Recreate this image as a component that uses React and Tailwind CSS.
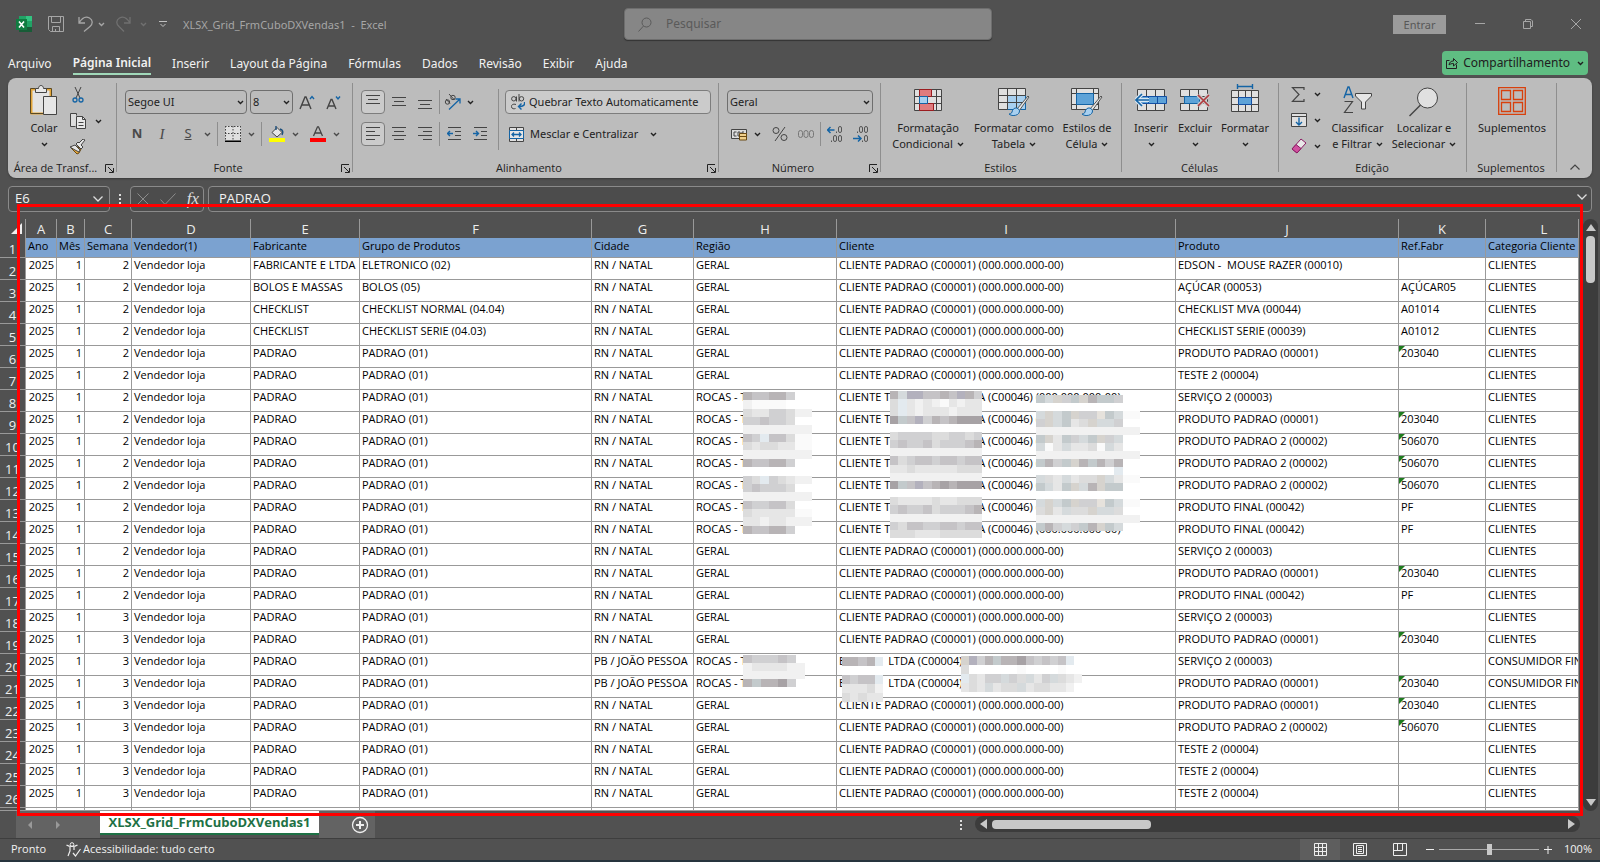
import { useState } from "react";

const MENU = ["Arquivo", "Página Inicial", "Inserir", "Layout da Página", "Fórmulas", "Dados", "Revisão", "Exibir", "Ajuda"];

const COLUMNS = [
  { letter: "A", title: "Ano", width: "w-[31px]" },
  { letter: "B", title: "Mês", width: "w-[28px]" },
  { letter: "C", title: "Semana", width: "w-[47px]" },
  { letter: "D", title: "Vendedor(1)", width: "w-[119px]" },
  { letter: "E", title: "Fabricante", width: "w-[109px]" },
  { letter: "F", title: "Grupo de Produtos", width: "w-[232px]" },
  { letter: "G", title: "Cidade", width: "w-[102px]" },
  { letter: "H", title: "Região", width: "w-[143px]" },
  { letter: "I", title: "Cliente", width: "w-[339px]" },
  { letter: "J", title: "Produto", width: "w-[223px]" },
  { letter: "K", title: "Ref.Fabr", width: "w-[87px]" },
  { letter: "L", title: "Categoria Cliente", width: "pl-6" },
];

// [semana, fabricante, grupo, local, produto, ref]
const P = "PADRAO";
const G = "PADRAO (01)";
const SALES = [
  [2, "FABRICANTE E LTDA", "ELETRONICO (02)", "natal", "EDSON -  MOUSE RAZER (00010)", ""],
  [2, "BOLOS E MASSAS", "BOLOS (05)", "natal", "AÇÚCAR (00053)", "AÇÚCAR05"],
  [2, "CHECKLIST", "CHECKLIST NORMAL (04.04)", "natal", "CHECKLIST MVA (00044)", "A01014"],
  [2, "CHECKLIST", "CHECKLIST SERIE (04.03)", "natal", "CHECKLIST SERIE (00039)", "A01012"],
  [2, P, G, "natal", "PRODUTO PADRAO (00001)", "203040"],
  [2, P, G, "natal", "TESTE 2 (00004)", ""],
  [2, P, G, "rocas", "SERVIÇO 2 (00003)", ""],
  [2, P, G, "rocas", "PRODUTO PADRAO (00001)", "203040"],
  [2, P, G, "rocas", "PRODUTO PADRAO 2 (00002)", "506070"],
  [2, P, G, "rocas", "PRODUTO PADRAO 2 (00002)", "506070"],
  [2, P, G, "rocas", "PRODUTO PADRAO 2 (00002)", "506070"],
  [2, P, G, "rocas", "PRODUTO FINAL (00042)", "PF"],
  [2, P, G, "rocas", "PRODUTO FINAL (00042)", "PF"],
  [2, P, G, "natal", "SERVIÇO 2 (00003)", ""],
  [2, P, G, "natal", "PRODUTO PADRAO (00001)", "203040"],
  [2, P, G, "natal", "PRODUTO FINAL (00042)", "PF"],
  [3, P, G, "natal", "SERVIÇO 2 (00003)", ""],
  [3, P, G, "natal", "PRODUTO PADRAO (00001)", "203040"],
  [3, P, G, "pessoa", "SERVIÇO 2 (00003)", ""],
  [3, P, G, "pessoa", "PRODUTO PADRAO (00001)", "203040"],
  [3, P, G, "natal", "PRODUTO PADRAO (00001)", "203040"],
  [3, P, G, "natal", "PRODUTO PADRAO 2 (00002)", "506070"],
  [3, P, G, "natal", "TESTE 2 (00004)", ""],
  [3, P, G, "natal", "TESTE 2 (00004)", ""],
  [3, P, G, "natal", "TESTE 2 (00004)", ""],
];

const CITY = { natal: "RN / NATAL", rocas: "RN / NATAL", pessoa: "PB / JOÃO PESSOA" };

// Masked blocks over private data, one letter per tile
const TONES = {
  s: "#a7a2a5", a: "#b8b4b6", b: "#c5c3c6", c: "#d0d0d2", d: "#dcdcdc", e: "#e6e6e6", f: "#f1f1f1",
  g: "#fafafa", w: "#ffffff", p: "#b3b1bd", t: "#c3cacc", u: "#d5dadc", y: "#d6d3ce", z: "#e6e2dc", h: "#e3eaef",
};
const MASKS = [
  {
    x: 743, y: 173, w: 26 / 3, h: 8.35,
    rows: ["abbaac..", "fggggw..", "deeccdff", "ccbccdww", "ffffffff", "bchbbdgg", "deddeegg", "ffffffff", "abbaac..", "........", "cdhcdeff", "cbcccdww", "ffffffff", "bccbbdww", "deeeeegg", "eefeefff", "abbaac.."],
  },
  {
    x: 890, y: 172, w: 8.364, h: 8.167,
    rows: ["auppbbabpac", "dhefefgefee", "dhefeeefeee", "stbpcabasss", "...........", "dccccddccdc", "cbccbdcccba", "fffffffffff", "bdcbbcbbcbb", "eedeeeeeddd", "fffffffffff", "stbpbasasss", "...........", "deeeedeeddd", "cbccbdcccba", "fffffffffff", "cdbbccbbcbb", "dddeeeddddd"],
  },
  {
    x: 1036, y: 176, w: 26 / 3, h: 8,
    rows: ["tuyctyattc..", "............", "uyutyccztugg", "cyutedyuuc..", "ffffffffffff", "tyetcutycu..", "ugeueedgue..", "ffffffffffff", "tactyataca..", "wwwwwwwwwh..", "udeueddyuegg", "tuetyuaytt..", "............", "uyutyccztugg", "dyeuddyuud..", "ffffffffffff", "tacuctaytu.."],
  },
  { x: 743, y: 436, w: 8.83, h: 8, rows: ["bcccbc.", "feeeeff", "fffffff", "ataasc."] },
  { x: 842, y: 438, w: 8.2, h: 8.9, rows: ["aabah", ".....", "bcbbh", "eeedf", "dedee"] },
  {
    x: 961, y: 437, w: 8.07, h: 8.9,
    rows: ["ypcataasbcbcbh.", "dwwwwwwgwwwwgw.", "hdeccucduecudef", "edeueddueddeef."],
  },
];

function Masks() {
  return (
    <svg className="pointer-events-none absolute inset-0 h-full w-full" shapeRendering="crispEdges" aria-hidden="true">
      {MASKS.map((m, i) =>
        m.rows.map((row, r) =>
          row.split("").map((tone, c) =>
            tone === "." ? null : (
              <rect key={`${i}-${r}-${c}`} x={m.x + c * m.w} y={m.y + r * m.h} width={m.w} height={m.h} fill={TONES[tone]} />
            )
          )
        )
      )}
    </svg>
  );
}

function Icon({ w = 16, h = 16, children, className = "" }) {
  return (
    <svg width={w} height={h} viewBox={`0 0 ${w} ${h}`} fill="none" stroke="#444" className={`shrink-0 ${className}`} aria-hidden="true">
      {children}
    </svg>
  );
}

function Chevron({ className = "" }) {
  return (
    <svg width="7" height="5" viewBox="0 0 7 5" fill="none" stroke="currentColor" strokeWidth="1.4" className={`shrink-0 ${className}`} aria-hidden="true">
      <path d="M1 1l2.5 2.5L6 1" />
    </svg>
  );
}

function Tool({ label, active, className = "w-[26px]", children }) {
  return (
    <button
      aria-label={label}
      className={`flex h-6 shrink-0 items-center justify-center rounded ${active ? "border border-[#7d7d7d] bg-[#cbcbcb]" : ""} ${className}`}
    >
      {children}
    </button>
  );
}

function Divider({ className = "h-6" }) {
  return <span className={`w-px shrink-0 bg-[#8e8e8e] ${className}`} />;
}

function Group({ title, launcher, className, children }) {
  return (
    <section className={`relative flex shrink-0 flex-col ${className}`} aria-label={title}>
      <div className="flex flex-1">{children}</div>
      <div className="flex h-5 items-center pr-0.5 font-['Open_Sans',sans-serif] text-[11px]">
        <span className="flex-1 truncate text-center">{title}</span>
        {launcher && (
          <button aria-label={`Opções de ${title}`} className="flex w-3 justify-center">
            <Icon w={9} h={9}>
              <path d="M.5 8V.5H8M3 3l5 5M8.500 4v4.500H4" stroke="#222" />
            </Icon>
          </button>
        )}
      </div>
      <span className="absolute right-0 top-[5px] h-[89px] w-px bg-[#8e8e8e]" />
    </section>
  );
}

function BigButton({ icon, lines, below, className }) {
  return (
    <button className={`flex shrink-0 flex-col items-center pt-1.5 text-[11px] leading-4 ${className}`}>
      <span className="mb-1 flex h-8 items-center justify-center">{icon}</span>
      {lines.map((line, i) => (
        <span key={line} className="flex items-center gap-1 whitespace-nowrap">
          {line}
          {!below && lines.length > 1 && i === lines.length - 1 && <Chevron />}
        </span>
      ))}
      {below && <Chevron className="mt-1.5" />}
    </button>
  );
}

function Combo({ label, value, className }) {
  return (
    <span className={`relative flex h-6 items-center ${className}`}>
      <select aria-label={label} defaultValue={value} className="h-full w-full appearance-none rounded border border-[#6f6f6f] bg-transparent pl-0.5 text-[11px] text-[#222]">
        <option>{value}</option>
      </select>
      <Chevron className="pointer-events-none absolute right-[3px]" />
    </span>
  );
}

function Lines({ rows }) {
  return (
    <Icon w={14} h={14}>
      {rows.map(([x, w, y]) => (
        <path key={y} d={`M${x} ${y}.5h${w}`} />
      ))}
    </Icon>
  );
}

function Brush() {
  return (
    <g>
      <path d="M30 8L19 21l2 2L31 9z" fill="#e6e6e6" stroke="#555" />
      <path d="M19 20c-3-.5-4.500 1.500-5 4-.5 1.500-1.500 2-3 2 2 2 6 2 8.500.5 2-1.500 2.500-3.500 1.500-5z" fill="#a8d0f0" stroke="#1464a5" />
    </g>
  );
}

function TitleBar() {
  return (
    <header className="grid h-12 grid-cols-[1fr_368px_1fr] items-center pl-4 text-[#a6a6a6]">
      <div className="flex items-center">
        <Icon>
          <path d="M3 0h7v5H3z" fill="#21a366" stroke="none" />
          <path d="M10 0h6v5h-6z" fill="#33c481" stroke="none" />
          <path d="M3 5h7v6H3z" fill="#107c41" stroke="none" />
          <path d="M10 5h6v6h-6z" fill="#21a366" stroke="none" />
          <path d="M3 11h13v5H3z" fill="#185c37" stroke="none" />
          <path d="M0 3h11v11H0z" fill="#107c41" stroke="none" />
          <path d="M3 5.500l5 6M8 5.500l-5 6" stroke="#fff" strokeWidth="1.600" />
        </Icon>
        <button aria-label="Salvar" className="ml-4">
          <Icon>
            <path d="M.5.5h15v15h-13l-2-2zM3.500.5v6h9v-6M4.500 15.500v-5h7v5M7.500 15v-2" stroke="#a6a6a6" />
          </Icon>
        </button>
        <button aria-label="Desfazer" className="ml-3.5 flex items-center gap-1">
          <Icon>
            <path d="M1 1v6h6M1 7c3-5 7-7 10.500-5 3.500 2 3.500 6 .5 8.500L6 15.500" stroke="#a6a6a6" strokeWidth="1.300" />
          </Icon>
          <Chevron />
        </button>
        <button aria-label="Refazer" className="ml-[11px] flex items-center gap-2 text-[#707070]">
          <Icon>
            <path d="M14 1v6H8M14 7c-3-5-7-7-10.500-5C0 4 0 8 3 10.500L8 15.500" stroke="#707070" strokeWidth="1.300" />
          </Icon>
          <Chevron />
        </button>
        <button aria-label="Personalizar" className="ml-3">
          <Icon w={8} h={8}>
            <path d="M0 1.500h8M1.500 4L4 6.500 6.500 4" stroke="#c0c0c0" />
          </Icon>
        </button>
        <h1 className="ml-4 whitespace-pre pt-0.5 text-[11px]">XLSX_Grid_FrmCuboDXVendas1  -  Excel</h1>
      </div>
      <label className="flex h-8 items-center rounded-sm border border-[#6e6e6e] bg-[#868686] shadow-[0_1px_1px_#333]">
        <Icon w={14} h={15} className="ml-[13px]">
          <circle cx="8.500" cy="5.500" r="4.500" stroke="#5a5a5a" />
          <path d="M5.500 9L.5 14.500" stroke="#5a5a5a" />
        </Icon>
        <input type="search" aria-label="Pesquisar" placeholder="Pesquisar" className="ml-3.5 flex-1 bg-transparent text-[12px] placeholder-[#5a5a5a] outline-none" />
      </label>
      <div className="flex items-center justify-end pr-[19px]">
        <button className="mr-[29px] h-[19px] w-[53px] bg-[#9b9b9b] text-[11px] leading-[19px] text-[#575757]">Entrar</button>
        <button aria-label="Minimizar" className="mr-[38px]">
          <Icon w={10} h={10}>
            <path d="M0 4.500h10" stroke="#a6a6a6" />
          </Icon>
        </button>
        <button aria-label="Restaurar" className="mr-[38px]">
          <Icon w={10} h={10}>
            <path d="M.5 2.500h7v7h-7zM2.500 2V.5H8L9.500 2v5.500H8" stroke="#a6a6a6" />
          </Icon>
        </button>
        <button aria-label="Fechar">
          <Icon w={10} h={10}>
            <path d="M0 0l10 10M10 0L0 10" stroke="#a6a6a6" />
          </Icon>
        </button>
      </div>
    </header>
  );
}

function MenuBar() {
  return (
    <nav className="flex h-[30px] items-start justify-between pl-2 pr-3">
      <div className="flex gap-[21px]">
        {MENU.map((item) => (
          <button
            key={item}
            className={`mt-1 h-[23px] text-[12px] leading-[21px] ${item === "Página Inicial" ? "border-b-2 border-[#a0d8b9] font-semibold" : ""}`}
          >
            {item}
          </button>
        ))}
      </div>
      <button className="mt-[3px] flex h-6 items-center rounded bg-[#5fbd82] px-1 text-[12px] text-[#202020]">
        <Icon w={12} h={12} className="mr-[5px]">
          <path d="M3.500 3.500h-3v8h10v-4M3 8c.5-3 2-4 4.500-4V1.500l4 4-4 3.500V6.500C5.500 6.500 4 7 3 8z" stroke="#222" />
        </Icon>
        Compartilhamento
        <Chevron className="ml-[7px]" />
      </button>
    </nav>
  );
}

function ClipboardGroup() {
  return (
    <Group title="Área de Transf..." launcher className="w-[109px]">
      <BigButton
        className="ml-3 w-12"
        lines={["Colar"]}
        below
        icon={
          <Icon w={28} h={30}>
            <path d="M1.500 4.500h19v24h-19z" fill="#e3e3e3" stroke="#e3a63a" strokeWidth="2" />
            <path d="M.5 3.500h5M16 3.500h5.500V12M.5 3.500v25h13" stroke="#5c4a22" />
            <path d="M5.500 7.500v-4h3c0-4 5-4 5 0h3v4z" fill="#e8e8e8" />
            <path d="M13.500 11.500h13v18h-13z" fill="#e6e6e6" />
          </Icon>
        }
      />
      <div className="ml-0.5 flex flex-col gap-0.5 pt-[5px]">
        <Tool label="Recortar" className="w-4">
          <Icon>
            <path d="M5 0l5 11M11 0L6 11" />
            <circle cx="5" cy="13" r="2" stroke="#1464a5" strokeWidth="1.300" />
            <circle cx="11" cy="13" r="2" stroke="#1464a5" strokeWidth="1.300" />
          </Icon>
        </Tool>
        <Tool label="Copiar" className="w-[31px] gap-2">
          <Icon w={17}>
            <path d="M5.500 13.500h-5v-13h6v2" fill="#ddd" />
            <path d="M6.500 3.500h6l3 3v9h-9z" fill="#e8e8e8" />
            <path d="M12.500 3.500v3h3M8.500 9.500h5M8.500 12.500h5" />
          </Icon>
          <Chevron />
        </Tool>
        <Tool label="Pincel de Formatação" className="w-4">
          <Icon>
            <path d="M1 9l6 6 2-1 2-4-5-3z" fill="#e8a93b" stroke="#6b4a12" />
            <path d="M0 8l5-2 5 5-1 2-4-2zM6 5l5 5 2-2-2-2 4-5-2-1-4 4-1-1z" fill="#e6e6e6" />
          </Icon>
        </Tool>
      </div>
    </Group>
  );
}

function FontGroup() {
  return (
    <Group title="Fonte" launcher className="w-[236px]">
      <div className="flex flex-col gap-2 pl-2 pt-3">
        <div className="flex items-center">
          <Combo label="Fonte" value="Segoe UI" className="w-[122px]" />
          <Combo label="Tamanho da fonte" value="8" className="ml-[3px] w-[43px]" />
          <Tool label="Aumentar fonte" className="ml-px w-[26px]">
            <Icon w={17} h={15}>
              <path d="M1 14L6 2h1l5 12M3 10h7" strokeWidth="1.400" />
              <path d="M11 4l2-2.500L15 4" stroke="#1464a5" strokeWidth="1.400" />
            </Icon>
          </Tool>
          <Tool label="Diminuir fonte">
            <Icon w={17} h={15}>
              <path d="M2 14L6 4.500h1L11 14M3.500 11h6" strokeWidth="1.400" />
              <path d="M11 1.500L13 4l2-2.500" stroke="#1464a5" strokeWidth="1.400" />
            </Icon>
          </Tool>
        </div>
        <div className="flex items-center text-[13px] text-[#4a4a4a]">
          <Tool label="Negrito" className="w-6"><b>N</b></Tool>
          <Tool label="Itálico"><i className="font-['Liberation_Serif',serif] text-[15px]">I</i></Tool>
          <Tool label="Sublinhado"><u>S</u></Tool>
          <Tool label="Tipos de sublinhado" className="mr-1 w-3"><Chevron /></Tool>
          <Divider />
          <Tool label="Bordas" className="ml-1 w-[22px]">
            <Icon>
              <path d="M0 0h16v14H0z" fill="#e0e0e0" stroke="none" />
              <path d="M0 .5h16M.5 0v14M15.500 0v14M8 0v14M0 7.500h16" strokeDasharray="1.500 1.500" />
              <path d="M0 15.300h16" stroke="#000" strokeWidth="1.500" />
            </Icon>
          </Tool>
          <Tool label="Opções de borda" className="ml-px w-3"><Chevron /></Tool>
          <Divider className="ml-1 h-6" />
          <Tool label="Cor de preenchimento" className="ml-1 w-[22px]">
            <Icon>
              <path d="M3 6.500L8 1.500l5 5-5 4.500z" fill="#e6e6e6" />
              <path d="M7 4V0M11 3c3 1 3.500 3 2 6" strokeWidth="1.400" stroke="#1c4f7c" />
              <path d="M0 12h16v4H0z" fill="#ffff00" stroke="none" />
            </Icon>
          </Tool>
          <Tool label="Cores de preenchimento" className="ml-px w-3"><Chevron /></Tool>
          <Tool label="Cor da fonte" className="ml-1.5 w-[22px]">
            <Icon>
              <path d="M3.500 10L7.500.8h1L12.500 10M5 7h6" strokeWidth="1.300" />
              <path d="M0 12h16v4H0z" fill="#ff0000" stroke="none" />
            </Icon>
          </Tool>
          <Tool label="Cores da fonte" className="ml-px w-3"><Chevron /></Tool>
        </div>
      </div>
    </Group>
  );
}

function AlignGroup() {
  return (
    <Group title="Alinhamento" launcher className="w-[366px]">
      <div className="flex flex-col gap-2 pl-2 pt-3">
        <div className="flex items-center">
          <Tool label="Alinhar em cima" active className="mr-px w-6"><Lines rows={[[0, 14, 0], [2, 10, 4], [0, 14, 8]]} /></Tool>
          <Tool label="Alinhar no meio"><Lines rows={[[0, 14, 2], [2, 10, 6], [0, 14, 10]]} /></Tool>
          <Tool label="Alinhar embaixo"><Lines rows={[[0, 14, 5], [2, 10, 9], [0, 14, 13]]} /></Tool>
          <Divider className="ml-px h-6" />
          <Tool label="Orientação" className="ml-1 w-[30px] gap-1.5">
            <Icon w={17}>
              <path d="M5 15.500L16 5M11.500 5H16v4.500" stroke="#1464a5" strokeWidth="1.300" />
              <circle cx="3.500" cy="8" r="2.200" />
              <circle cx="9" cy="3.500" r="2.200" />
              <path d="M2 5l4 4.500M5 0l5.500 6" />
            </Icon>
            <Chevron />
          </Tool>
        </div>
        <div className="flex items-center">
          <Tool label="Alinhar à esquerda" active className="mr-px w-6"><Lines rows={[[0, 14, 0], [0, 9, 4], [0, 14, 8], [0, 9, 12]]} /></Tool>
          <Tool label="Centralizar"><Lines rows={[[0, 14, 0], [2, 10, 4], [0, 14, 8], [2, 10, 12]]} /></Tool>
          <Tool label="Alinhar à direita"><Lines rows={[[0, 14, 0], [5, 9, 4], [0, 14, 8], [5, 9, 12]]} /></Tool>
          <Divider className="ml-px h-6" />
          <Tool label="Diminuir recuo" className="ml-px w-[26px]">
            <Icon w={15} h={14}>
              <path d="M1 .5h13M8 4.500h6M8 8.500h6M1 12.500h13" />
              <path d="M6 6.500H.5M3 4L.5 6.500 3 9" stroke="#1464a5" strokeWidth="1.400" />
            </Icon>
          </Tool>
          <Tool label="Aumentar recuo">
            <Icon w={15} h={14}>
              <path d="M1 .5h13M8 4.500h6M8 8.500h6M1 12.500h13" />
              <path d="M0 6.500h5.500M3 4l2.500 2.500L3 9" stroke="#1464a5" strokeWidth="1.400" />
            </Icon>
          </Tool>
        </div>
      </div>
      <Divider className="ml-[5px] mt-[11px] h-[61px]" />
      <div className="ml-1.5 flex flex-col gap-2 pt-3 text-[11px]">
        <button className="flex h-6 w-[206px] items-center gap-1 whitespace-nowrap rounded border border-[#7d7d7d] bg-[#cbcbcb] pl-[5px]">
          <Icon w={14} h={16}>
            <circle cx="2.800" cy="4.800" r="2.200" />
            <circle cx="10.500" cy="4.800" r="2.200" />
            <path d="M5.500 2.500v5M8 0v7.500M5 10.500c-3-1-5 .5-4.500 2.500.5 2 2.500 2 4 1.500" />
            <path d="M13.500 8c.5 3-1 4.500-5.500 4.500M10.500 9.500l-3 3 3 3" stroke="#1464a5" strokeWidth="1.400" />
          </Icon>
          Quebrar Texto Automaticamente
        </button>
        <button className="flex h-6 items-center gap-1.5 whitespace-nowrap pl-1">
          <Icon w={15} h={15}>
            <path d="M.5.5h14v14H.5zM7.500.5v3M7.500 11.500v3" fill="#e0e0e0" />
            <path d="M.5 3.500h14v8H.5z" stroke="#1464a5" fill="#e6e6e6" />
            <path d="M3 7.500h9M5 5.500l-2 2 2 2M10 5.500l2 2-2 2" stroke="#1464a5" strokeWidth="1.300" />
          </Icon>
          Mesclar e Centralizar
          <Chevron className="ml-1.5" />
        </button>
      </div>
    </Group>
  );
}

function DecimalIcon({ more }) {
  return (
    <Icon w={16} h={17}>
      {more ? (
        <>
          <path d="M7.500 4H.5M3.500 1L.5 4l3 3" stroke="#1464a5" strokeWidth="1.500" />
          <path d="M9.500 5.500V7M4.500 14.500V16" stroke="#555" />
          <rect x="11.500" y=".5" width="3" height="6" rx="1.500" stroke="#555" />
          <rect x="6.500" y="9.500" width="3" height="6" rx="1.500" stroke="#555" />
          <rect x="11.500" y="9.500" width="3" height="6" rx="1.500" stroke="#555" />
        </>
      ) : (
        <>
          <path d="M0 12.500h8M5 9.500l3 3-3 3" stroke="#1464a5" strokeWidth="1.500" />
          <path d="M4.500 5.500V7M9.500 14.500V16" stroke="#555" />
          <rect x="6.500" y=".5" width="3" height="6" rx="1.500" stroke="#555" />
          <rect x="11.500" y=".5" width="3" height="6" rx="1.500" stroke="#555" />
          <rect x="11.500" y="9.500" width="3" height="6" rx="1.500" stroke="#555" />
        </>
      )}
    </Icon>
  );
}

function NumberGroup() {
  return (
    <Group title="Número" launcher className="w-[162px]">
      <div className="flex flex-col gap-2 pl-2 pt-3">
        <Combo label="Formato de número" value="Geral" className="w-[146px]" />
        <div className="flex items-center">
          <Tool label="Formato de contabilização" className="ml-1 w-[29px] gap-1.5">
            <Icon w={17} h={13}>
              <path d="M.5 1.500h15v9H.5z" fill="#ddd" />
              <path d="M5.500 4H3v4h2.500M7 4h2v4H7zM11 8V4h2" />
              <path d="M8.500 5.500h7v6.500h-7zM8.500 8.500h7" fill="#f0cf8a" stroke="#6b4a12" />
            </Icon>
            <Chevron />
          </Tool>
          <Tool label="Porcentagem" className="ml-[7px] w-[26px]">
            <Icon>
              <circle cx="4" cy="4.500" r="3" />
              <circle cx="12" cy="11.500" r="3" />
              <path d="M13 1L3 15" />
            </Icon>
          </Tool>
          <Tool label="Separador de milhares">
            <Icon w={16} h={8}>
              <rect x=".5" y=".5" width="4" height="7" rx="2" stroke="#777" />
              <rect x="6" y=".5" width="4" height="7" rx="2" stroke="#777" />
              <rect x="11.500" y=".5" width="4" height="7" rx="2" stroke="#777" />
            </Icon>
          </Tool>
          <Divider className="ml-px h-6" />
          <Tool label="Aumentar casas decimais" className="ml-px w-[26px]"><DecimalIcon more /></Tool>
          <Tool label="Diminuir casas decimais"><DecimalIcon /></Tool>
        </div>
      </div>
    </Group>
  );
}

function StylesGroup() {
  return (
    <Group title="Estilos" className="w-[241px]">
      <BigButton
        className="ml-0.5 w-[90px]"
        lines={["Formatação", "Condicional"]}
        icon={
          <Icon w={28} h={22}>
            <path d="M.5.500h27v21H.500z" fill="#e0e0e0" />
            <path d="M5.500 0v22M22.500 0v22M.5 7.500h27M.5 14.500h27" />
            <path d="M5.500.5h12v7h-12zM5.500 14.500h14v7h-14z" fill="#e07b7e" stroke="#9b1c20" />
            <path d="M5.500 7.500h8v7h-8z" fill="#a8d0f0" stroke="#1464a5" />
          </Icon>
        }
      />
      <BigButton
        className="w-[82px]"
        lines={["Formatar como", "Tabela"]}
        icon={
          <Icon w={32} h={28} className="translate-y-0.5">
            <path d="M.5.5h27v21H.5z" fill="#e0e0e0" />
            <path d="M9.500 7.500h18v14h-18z" fill="#a8d0f0" stroke="#1464a5" />
            <path d="M.5 7.500h27M.5 14.500h27M9.500.5v21M18.500.5v21" />
            <Brush />
          </Icon>
        }
      />
      <BigButton
        className="w-[64px]"
        lines={["Estilos de", "Célula"]}
        icon={
          <Icon w={32} h={28} className="translate-y-0.5">
            <path d="M.5.500h27v21H.500z" fill="#e0e0e0" />
            <path d="M.5 5.500h27M.5 16.500h27M5.500.5v21M22.500.5v21" />
            <path d="M5.500 5.500h17v11h-17z" fill="#5ea3d8" stroke="#1464a5" />
            <Brush />
          </Icon>
        }
      />
    </Group>
  );
}

function CellsGroup() {
  return (
    <Group title="Células" className="w-[157px]">
      <BigButton
        className="ml-2 w-[42px]"
        lines={["Inserir"]}
        below
        icon={
          <Icon w={32} h={22}>
            <path d="M2.500.5h27v21h-27z" fill="#e0e0e0" />
            <path d="M11.500.5v21M20.500.5v21" />
            <path d="M6 7.500h25.500v7H6z" fill="#5ea3d8" stroke="#1450a5" />
            <path d="M13.500 7.500v7M22.500 7.500v7" stroke="#1450a5" />
            <path d="M14 11H1M7 5l-6 6 6 6" stroke="#d8e6f2" strokeWidth="4" />
            <path d="M14 11H1M7 5l-6 6 6 6" stroke="#1464a5" strokeWidth="1.600" />
          </Icon>
        }
      />
      <BigButton
        className="w-[46px]"
        lines={["Excluir"]}
        below
        icon={
          <Icon w={30} h={22}>
            <path d="M.5.500h27v21H.500z" fill="#e0e0e0" />
            <path d="M9.500.5v21M18.500.5v21M.5 7.500h27M.5 14.500h27" />
            <path d="M0 8h4v6H0z" fill="#bdbdbd" stroke="none" />
            <path d="M4.500 7.500h15v7h-15z" fill="#5ea3d8" stroke="#1464a5" />
            <path d="M18 6l11 11M29 6L18 17" stroke="#c9c9c9" strokeWidth="4" />
            <path d="M18 6l11 11M29 6L18 17" stroke="#b03a3e" strokeWidth="1.600" />
          </Icon>
        }
      />
      <BigButton
        className="w-[54px]"
        lines={["Formatar"]}
        below
        icon={
          <Icon w={28} h={28} className="-translate-y-0.5">
            <path d="M6.500 2.500h15M6.500 0v5M21.500 0v5" stroke="#1464a5" strokeWidth="1.400" />
            <path d="M.5 6.500h27v21H.5z" fill="#e0e0e0" />
            <path d="M.5 13.500h27M.5 20.500h27M7.500 6.500v21M14.500 6.500v7M14.500 20.500v7M20.500 6.500v21" />
            <path d="M7.500 13.500h13v7h-13z" fill="#5ea3d8" stroke="#1450a5" />
          </Icon>
        }
      />
    </Group>
  );
}

function EditGroup() {
  return (
    <Group title="Edição" className="w-[188px]">
      <div className="ml-[9px] flex flex-col gap-0.5 pt-1">
        <Tool label="AutoSoma" className="w-9 gap-2">
          <Icon w={15} h={15}>
            <path d="M13 3V.7H1.500L8 7.500l-6.500 6.800H13V12" strokeWidth="1.200" />
          </Icon>
          <Chevron />
        </Tool>
        <Tool label="Preencher" className="w-9 gap-[7px]">
          <Icon w={16} h={14}>
            <path d="M.5.500h15v13H.500zM.5 3.500h15" fill="#e0e0e0" />
            <path d="M8 4.500v7M5 9l3 3 3-3" stroke="#1464a5" strokeWidth="1.400" />
          </Icon>
          <Chevron />
        </Tool>
        <Tool label="Limpar" className="w-9 gap-[7px]">
          <Icon>
            <path d="M10 1l5 4-9 10-5-4z" fill="#e8e8e8" stroke="#8a1c63" />
            <path d="M5 6.500l5 4L6 15l-5-4z" fill="#d0509f" stroke="#8a1c63" />
          </Icon>
          <Chevron />
        </Tool>
      </div>
      <BigButton
        className="ml-0.5 w-[63px]"
        lines={["Classificar", "e Filtrar"]}
        icon={
          <Icon w={29} h={28}>
            <path d="M1 12L5 1h1l4 11M2.500 8.500h6" stroke="#1464a5" strokeWidth="1.400" />
            <path d="M1.500 15.500h8L1.500 26.500h8.500" strokeWidth="1.200" />
            <path d="M12.500 7.500h16v2.500l-6 6v7h-4v-7l-6-6z" fill="#e6e6e6" />
          </Icon>
        }
      />
      <BigButton
        className="w-[70px]"
        lines={["Localizar e", "Selecionar"]}
        icon={
          <Icon w={30} h={30} className="translate-y-0.5">
            <circle cx="18.500" cy="11" r="10" fill="#e0e0e0" />
            <path d="M11.500 18L.5 29" strokeWidth="1.400" />
          </Icon>
        }
      />
    </Group>
  );
}

function Ribbon() {
  return (
    <div className="mx-2 flex h-[100px] rounded-lg bg-[#bcbcbc] text-[#222] shadow-[0_1px_2px_#3a3a3a]">
      <ClipboardGroup />
      <FontGroup />
      <AlignGroup />
      <NumberGroup />
      <StylesGroup />
      <CellsGroup />
      <EditGroup />
      <Group title="Suplementos" className="w-[90px]">
        <BigButton
          className="w-full"
          lines={["Suplementos"]}
          icon={
            <Icon w={28} h={28} className="translate-y-px">
              <path d="M.7.7h26.600v26.600H.7zM3.500 3.500h9v9h-9zM15.500 3.500h9v9h-9zM3.500 15.500h9v9h-9zM15.500 15.500h9v9h-9z" stroke="#d8400c" strokeWidth="1.300" />
            </Icon>
          }
        />
      </Group>
      <div className="flex flex-1 items-end justify-center pb-2">
        <button aria-label="Recolher faixa de opções">
          <Icon w={10} h={6}>
            <path d="M.5 5.500L5 1l4.500 4.500" strokeWidth="1.200" />
          </Icon>
        </button>
      </div>
    </div>
  );
}

function FormulaBar() {
  const [formula, setFormula] = useState("PADRAO");
  return (
    <div className="mx-2 mt-2 flex h-[26px] items-stretch font-['Open_Sans',sans-serif] text-[13px]">
      <label className="flex w-[102px] items-center rounded border border-[#8a8a8a] bg-[#4c4c4c] pr-1.5">
        <input aria-label="Caixa de nome" defaultValue="E6" className="w-0 flex-1 bg-transparent pl-1.5 outline-none" />
        <Icon w={10} h={6}>
          <path d="M.5.500L5 5 9.500.500" stroke="#ddd" strokeWidth="1.300" />
        </Icon>
      </label>
      <span className="flex w-5 flex-col items-center justify-center gap-0.5">
        <i className="size-0.5 bg-[#ddd]" />
        <i className="size-0.5 bg-[#ddd]" />
        <i className="size-0.5 bg-[#ddd]" />
      </span>
      <div className="flex w-[74px] items-center justify-between rounded border border-[#8a8a8a] bg-[#4c4c4c] pl-1.5 pr-1">
        <button aria-label="Cancelar">
          <Icon w={12} h={12}>
            <path d="M.5.500l11 11M11.500.500l-11 11" stroke="#8c8c8c" />
          </Icon>
        </button>
        <button aria-label="Inserir valor">
          <Icon w={16} h={12}>
            <path d="M.5 6.500l4.500 5L15.500.500" stroke="#8c8c8c" />
          </Icon>
        </button>
        <button aria-label="Inserir função" className="font-['Liberation_Serif',serif] text-[17px] italic leading-5 text-[#ddd]">fx</button>
      </div>
      <label className="ml-1 flex flex-1 items-center rounded border border-[#8a8a8a] bg-[#4c4c4c] pr-1">
        <input aria-label="Barra de fórmulas" value={formula} onChange={(e) => setFormula(e.target.value)} className="flex-1 bg-transparent pl-2.5 outline-none" />
        <Icon w={10} h={6} className="mb-1">
          <path d="M.5.500L5 5 9.500.500" stroke="#ddd" strokeWidth="1.300" />
        </Icon>
      </label>
    </div>
  );
}

function clientText(place) {
  if (place === "rocas") {
    return (
      <>
        CLIENTE T.<span className="inline-block w-[85px]" />A (C00046) (000.000.000-00)
      </>
    );
  }
  if (place === "pessoa") {
    return (
      <>
        E<span className="inline-block w-[43px]" />LTDA (C00004)
      </>
    );
  }
  return "CLIENTE PADRAO (C00001) (000.000.000-00)";
}

const CELL = "overflow-hidden whitespace-pre border-b border-r border-[#999] p-0 align-top";
const ROW_HEAD = "border-b border-r border-[#999] bg-[#515151] p-0 text-center align-bottom text-[13px] font-normal leading-4 text-[#eee]";

function Row({ number, sale }) {
  const [week, maker, group, place, product, ref] = sale;
  return (
    <tr className="h-[22px]">
      <th scope="row" className={ROW_HEAD}>{number}</th>
      <td className={`${CELL} pr-0.5 text-right`}>2025</td>
      <td className={`${CELL} pr-0.5 text-right`}>1</td>
      <td className={`${CELL} pr-0.5 text-right`}>{week}</td>
      <td className={`${CELL} pl-0.5`}>Vendedor loja</td>
      <td className={`${CELL} pl-0.5`}>{maker}</td>
      <td className={`${CELL} pl-0.5`}>{group}</td>
      <td className={`${CELL} pl-0.5`}>{CITY[place]}</td>
      <td className={`${CELL} pl-0.5`}>{place === "natal" ? "GERAL" : "ROCAS - T"}</td>
      <td className={`${CELL} pl-0.5`}>{clientText(place)}</td>
      <td className={`${CELL} pl-0.5`}>{product}</td>
      <td className={`${CELL} relative pl-0.5`}>
        {/^\d+$/.test(ref) && <span className="absolute left-0 top-0 border-r-[6px] border-t-[6px] border-r-transparent border-t-[#1e7b1e]" />}
        {ref}
      </td>
      <td className={`${CELL} pl-0.5`}>{place === "pessoa" ? "CONSUMIDOR FINAL" : "CLIENTES"}</td>
    </tr>
  );
}

function Sheet() {
  return (
    <div className="relative mt-[7px] flex flex-1 font-['Open_Sans',sans-serif]">
      <div className="relative flex-1">
        <table className="w-full table-fixed border-separate border-spacing-0 bg-white text-[11px] leading-[14px] text-black">
          <thead className="bg-[#515151] text-[#eee]">
            <tr className="h-[19px]">
              <th className="w-[26px] border-r border-[#999] p-0">
                <span className="ml-auto mr-[3px] block w-[11px] border-b-[11px] border-l-[11px] border-b-[#eee] border-l-transparent" />
              </th>
              {COLUMNS.map((col) => (
                <th key={col.letter} scope="col" className={`border-r border-[#999] pb-0 pr-0 pt-0.5 text-[13px] font-normal leading-[17px] ${col.width}`}>
                  {col.letter}
                </th>
              ))}
            </tr>
          </thead>
          <tbody>
            <tr className="h-5 bg-[#7ba2d0] leading-4">
              <th scope="row" className={ROW_HEAD}>1</th>
              {COLUMNS.map((col) => (
                <td key={col.letter} className={`${CELL} pl-0.5`}>{col.title}</td>
              ))}
            </tr>
            {SALES.map((sale, i) => (
              <Row key={i} number={i + 2} sale={sale} />
            ))}
            <tr className="h-[3px]">
              <th className="border-b border-r border-[#999] bg-[#515151] p-0" />
              {COLUMNS.map((col) => (
                <td key={col.letter} className="border-b border-r border-[#999] p-0" />
              ))}
            </tr>
          </tbody>
        </table>
        <Masks />
      </div>
      <div className="ml-1 mr-0.5 flex w-[15px] flex-col items-center rounded-lg bg-[#3c3c3c] py-[5px]">
        <span className="border-x-[5px] border-b-[7px] border-x-transparent border-b-[#c8c8c8]" />
        <span className="mt-[5px] h-[47px] w-[9px] rounded bg-[#c8c8c8]" />
        <span className="mt-auto border-x-[5px] border-t-[7px] border-x-transparent border-t-[#c8c8c8]" />
      </div>
      {/* selection frame */}
      <div className="pointer-events-none absolute -bottom-[5px] -top-[15px] left-[17px] right-[17px] z-10 border-[3px] border-[#ff0000]" />
    </div>
  );
}

function SheetTabs() {
  return (
    <div className="flex h-[27px] items-start pl-4">
      <div className="flex h-full w-[84px] items-center gap-6 bg-[#636363] pl-3">
        <button aria-label="Planilha anterior" className="border-y-4 border-r-4 border-y-transparent border-r-[#999]" />
        <button aria-label="Próxima planilha" className="border-y-4 border-l-4 border-y-transparent border-l-[#999]" />
      </div>
      <button className="h-6 w-[219px] border-b-2 border-[#1e7145] bg-white pt-0.5 font-['Open_Sans',sans-serif] text-[13px] font-bold text-[#1e7145]">XLSX_Grid_FrmCuboDXVendas1</button>
      <div className="flex h-full w-14 items-center justify-end bg-[#636363] pr-1.5">
        <button aria-label="Nova planilha">
          <Icon w={18} h={18}>
            <circle cx="9" cy="9" r="7.500" stroke="#eee" strokeWidth="1.300" />
            <path d="M9 5v8M5 9h8" stroke="#eee" strokeWidth="2" />
          </Icon>
        </button>
      </div>
      <span className="ml-auto mr-[13px] flex h-full flex-col items-center justify-center gap-0.5">
        <i className="size-0.5 bg-[#ddd]" />
        <i className="size-0.5 bg-[#ddd]" />
        <i className="size-0.5 bg-[#ddd]" />
      </span>
      <div className="mr-5 mt-[5px] flex h-4 w-[605px] items-center rounded-lg bg-[#3c3c3c] px-[5px]">
        <span className="border-y-[5px] border-r-[7px] border-y-transparent border-r-[#c8c8c8]" />
        <span className="ml-[5px] h-[9px] w-[159px] rounded bg-[#c8c8c8]" />
        <span className="ml-auto border-y-[5px] border-l-[7px] border-y-transparent border-l-[#c8c8c8]" />
      </div>
    </div>
  );
}

function StatusBar() {
  return (
    <footer className="flex h-6 items-center border-b-2 border-t border-b-[#26343d] border-t-[#3e3e3e] pl-[11px] pr-2 font-['Open_Sans',sans-serif] text-[11px]">
      <span>Pronto</span>
      <button className="ml-5 flex items-center gap-0.5">
        <Icon w={15} h={15}>
          <circle cx="6" cy="2.500" r="1.800" stroke="#eee" />
          <path d="M.5 3c3 2 8 2 11 0M4 5v4l-2 5M8 5v3M7 11l2.500 3L14.500 7" stroke="#eee" strokeWidth="1.200" />
        </Icon>
        Acessibilidade: tudo certo
      </button>
      <button aria-label="Normal" className="ml-auto flex h-full w-10 items-center justify-center bg-[#5e5e5e]">
        <Icon w={13} h={13}>
          <path d="M.5.500h12v12H.500zM.5 4.500h12M.5 8.500h12M4.500.500v12M8.500.500v12" stroke="#eee" />
        </Icon>
      </button>
      <button aria-label="Layout da Página" className="flex w-10 justify-center">
        <Icon w={14} h={13}>
          <path d="M.5.500h13v12H.500zM3.500 2.500h7v8h-7zM5 4.500h4M5 6.500h4M5 8.500h4" stroke="#eee" />
        </Icon>
      </button>
      <button aria-label="Quebra de página" className="flex w-10 justify-center">
        <Icon w={14} h={13}>
          <path d="M.5.500h13v12H.500zM.5 7.500h9V.500M4.500.500v7" stroke="#eee" />
        </Icon>
      </button>
      <button aria-label="Diminuir zoom" className="ml-1.5 mr-[5px] flex w-2">
        <Icon w={8} h={8}>
          <path d="M0 3.500h8" stroke="#eee" />
        </Icon>
      </button>
      <input
        type="range"
        aria-label="Zoom"
        defaultValue="50"
        className="h-3 w-[100px] appearance-none bg-[linear-gradient(#aaa,#aaa)] bg-[length:100%_1px] bg-center bg-no-repeat [&::-webkit-slider-thumb]:h-[11px] [&::-webkit-slider-thumb]:w-[5px] [&::-webkit-slider-thumb]:appearance-none [&::-webkit-slider-thumb]:bg-[#c8c8c8]"
      />
      <button aria-label="Aumentar zoom" className="ml-[5px] mr-3 flex w-2">
        <Icon w={8} h={8}>
          <path d="M0 3.500h8M4 0v8" stroke="#eee" />
        </Icon>
      </button>
      <span>100%</span>
    </footer>
  );
}

export default function App() {
  return (
    <div className="flex min-h-screen flex-col bg-[#515151] font-['Noto_Sans','Open_Sans',sans-serif] text-[#f2f2f2]">
      <TitleBar />
      <MenuBar />
      <Ribbon />
      <FormulaBar />
      <Sheet />
      <SheetTabs />
      <StatusBar />
    </div>
  );
}
